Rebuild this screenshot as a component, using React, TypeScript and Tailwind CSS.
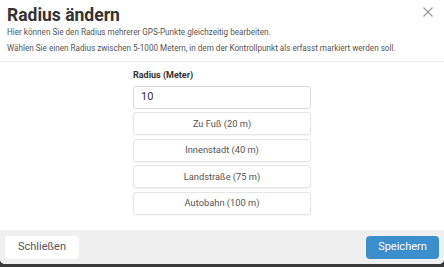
import React from "react";

export default function App() {
  const presets = ["Zu Fuß (20 m)", "Innenstadt (40 m)", "Landstraße (75 m)", "Autobahn (100 m)"];
  return (
    <div className="w-[444px] h-[267px] bg-[#3a3a3a] overflow-hidden" style={{ fontFamily: "Roboto, 'Liberation Sans', sans-serif" }}>
      <div className="h-[264px] bg-white rounded-b-[5px] flex flex-col overflow-hidden">
        <div className="relative px-[7px] pt-[4px] h-[62px] border-b border-[#ececec]">
          <h1 className="text-[17.5px] font-bold text-[#333] leading-[22px]">Radius ändern</h1>
          <p className="text-[8.15px] text-[#555] leading-[10px] mt-[1px]">Hier können Sie den Radius mehrerer GPS-Punkte gleichzeitig bearbeiten.</p>
          <p className="text-[8.15px] text-[#555] leading-[10px] mt-[6px]">Wählen Sie einen Radius zwischen 5-1000 Metern, in dem der Kontrollpunkt als erfasst markiert werden soll.</p>
          <button className="absolute right-[10px] top-[6px] w-[12px] h-[12px] text-[#999]">
            <svg viewBox="0 0 12 12" width="12" height="12" fill="none" stroke="currentColor" strokeWidth="1.1">
              <path d="M1.5 1.5 L10.5 10.5 M10.5 1.5 L1.5 10.5" />
            </svg>
          </button>
        </div>
        <div className="flex-1 flex flex-col items-center pt-[7px]">
          <div className="w-[178px] flex flex-col">
            <label className="text-[9px] font-bold text-[#333] leading-[12px] mb-[5px]">Radius (Meter)</label>
            <div className="h-[23px] border border-[#dcdcdc] rounded-[3px] flex items-center px-[7px] text-[11px] text-[#333]">10</div>
            <div className="flex flex-col gap-[3.6px] mt-[3px]">
              {presets.map((p) => (
                <div key={p} className="h-[23px] border border-[#e6e6e6] rounded-[3px] flex items-center justify-center text-[9.3px] text-[#555] shadow-[0_1px_1px_rgba(0,0,0,0.04)]">
                  {p}
                </div>
              ))}
            </div>
          </div>
        </div>
        <div className="h-[34px] bg-[#f0f0f0] flex items-center justify-between px-[5px]">
          <button className="h-[23px] w-[74px] bg-white rounded-[4px] text-[11px] text-[#555]">Schließen</button>
          <button className="h-[23px] w-[73px] bg-[#3a8fcc] rounded-[4px] text-[11px] text-white">Speichern</button>
        </div>
      </div>
    </div>
  );
}
